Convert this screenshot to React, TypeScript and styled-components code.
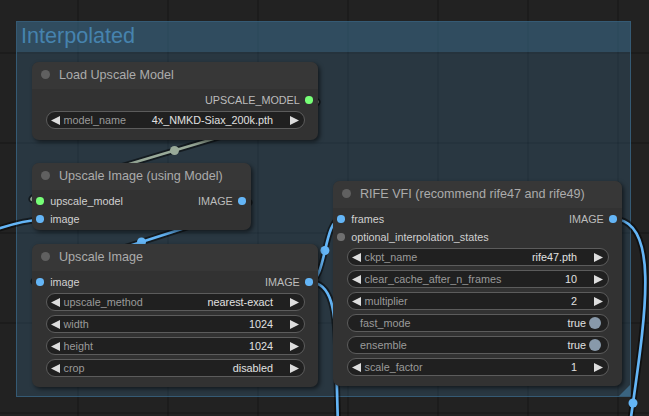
import React from "react";
import styled, { createGlobalStyle } from "styled-components";

const FONT = `"Liberation Sans", Arial, sans-serif`;

const GlobalStyle = createGlobalStyle`
  html, body { margin: 0; padding: 0; background: #222; overflow: hidden; }
  #root { width: 649px; height: 416px; }
`;

const Canvas = styled.div`
  position: relative;
  width: 649px;
  height: 416px;
  overflow: hidden;
  background-color: #222;
  background-image:
    linear-gradient(to right, rgba(0, 0, 0, 0.17) 2px, transparent 2px),
    linear-gradient(to bottom, rgba(0, 0, 0, 0.17) 2px, transparent 2px);
  background-size: 90px 90px;
  background-position: 77px 52px;
  font-family: ${FONT};
`;

const Group = styled.div`
  position: absolute;
  left: 16px;
  top: 21px;
  width: 615px;
  height: 376px;
  box-sizing: border-box;
  background: rgba(63, 120, 158, 0.25);
  border: 1px solid rgba(63, 120, 158, 0.55);
  display: flex;
  flex-direction: column;
`;

const GroupTitle = styled.div`
  height: 30px;
  background: rgba(63, 120, 158, 0.33);
  color: #4683ae;
  font-size: 21.6px;
  line-height: 28px;
  padding-left: 4px;
  white-space: nowrap;
`;

const ResizeCorner = styled.div`
  position: absolute;
  right: 0;
  bottom: 0;
  width: 11px;
  height: 11px;
  background: rgba(70, 130, 170, 0.6);
  clip-path: polygon(100% 0, 100% 100%, 0 100%);
`;

const LinksLayer = styled.svg`
  position: absolute;
  left: 0;
  top: 0;
  width: 649px;
  height: 416px;
  overflow: visible;
  pointer-events: none;
`;

const Node = styled.div<{ $x: number; $y: number; $w: number }>`
  position: absolute;
  left: ${(p) => p.$x}px;
  top: ${(p) => p.$y}px;
  width: ${(p) => p.$w}px;
  background: #323232;
  border-radius: 7px;
  box-shadow: 2px 2px 4px rgba(0, 0, 0, 0.55);
  display: flex;
  flex-direction: column;
`;

const NodeTitle = styled.div`
  height: 27px;
  box-sizing: border-box;
  background: #373737;
  border-radius: 7px 7px 0 0;
  display: flex;
  align-items: center;
  gap: 9.5px;
  padding: 0 0 2px 8.5px;
  color: #ababab;
  font-size: 12.6px;
  white-space: nowrap;
`;

const TitleDot = styled.span`
  width: 9px;
  height: 9px;
  border-radius: 50%;
  background: #606060;
  flex: none;
`;

const NodeBody = styled.div<{ $pb: number }>`
  display: flex;
  flex-direction: column;
  padding: 2px 0 ${(p) => p.$pb}px;
`;

const SlotRow = styled.div`
  height: 18px;
  display: flex;
  align-items: center;
  font-size: 10.8px;
  white-space: nowrap;
`;

const InputSlot = styled.div`
  display: flex;
  align-items: center;
  gap: 6.4px;
  padding-left: 4.4px;
  color: #d0d0d0;
`;

const OutputSlot = styled.div`
  display: flex;
  align-items: center;
  gap: 5.4px;
  padding-right: 5.4px;
  margin-left: auto;
  color: #bcbcbc;
`;

const SlotDot = styled.span<{ $color: string }>`
  width: 7.4px;
  height: 7.4px;
  border-radius: 50%;
  background: ${(p) => p.$color};
  flex: none;
`;

const Widgets = styled.div`
  display: flex;
  flex-direction: column;
  gap: 4px;
  margin-top: 2px;
  padding: 0 13.5px;
`;

const WidgetBox = styled.div<{ $toggle?: boolean }>`
  height: 18px;
  box-sizing: border-box;
  border: 1px solid #5c5c5c;
  border-radius: 9px;
  background: #202020;
  display: flex;
  align-items: center;
  font-size: 10.8px;
  line-height: 16px;
  white-space: nowrap;
  padding: ${(p) => (p.$toggle ? "0 6.2px 0 12.5px" : "0 4.4px")};
`;

const WLabel = styled.span<{ $toggle?: boolean }>`
  color: #9a9a9a;
  flex: 1;
  margin-left: ${(p) => (p.$toggle ? "0" : "3.6px")};
`;

const WValue = styled.span<{ $toggle?: boolean }>`
  color: #e0e0e0;
  margin-right: ${(p) => (p.$toggle ? "2.7px" : "17.1px")};
`;

const Knob = styled.span`
  width: 12.6px;
  height: 12.6px;
  border-radius: 50%;
  background: #8899aa;
  flex: none;
`;

const ArrowIcon = styled.svg`
  width: 9px;
  height: 9px;
  flex: none;
  display: block;
`;

const BLUE = "#64b5f6";
const GREEN = "#77ff77";
const GRAY = "#707070";

type Slot = { label: string; color: string };
type Widget =
  | { kind: "combo"; label: string; value: string }
  | { kind: "toggle"; label: string; value: string };

type NodeDef = {
  title: string;
  x: number;
  y: number;
  w: number;
  pb: number;
  inputs: Slot[];
  outputs: Slot[];
  widgets: Widget[];
};

const nodes: NodeDef[] = [
  {
    title: "Load Upscale Model",
    x: 32,
    y: 62,
    w: 286,
    pb: 11,
    inputs: [],
    outputs: [{ label: "UPSCALE_MODEL", color: GREEN }],
    widgets: [{ kind: "combo", label: "model_name", value: "4x_NMKD-Siax_200k.pth" }],
  },
  {
    title: "Upscale Image (using Model)",
    x: 32,
    y: 163,
    w: 219,
    pb: 2,
    inputs: [
      { label: "upscale_model", color: GREEN },
      { label: "image", color: BLUE },
    ],
    outputs: [{ label: "IMAGE", color: BLUE }],
    widgets: [],
  },
  {
    title: "Upscale Image",
    x: 32,
    y: 244,
    w: 286,
    pb: 10,
    inputs: [{ label: "image", color: BLUE }],
    outputs: [{ label: "IMAGE", color: BLUE }],
    widgets: [
      { kind: "combo", label: "upscale_method", value: "nearest-exact" },
      { kind: "combo", label: "width", value: "1024" },
      { kind: "combo", label: "height", value: "1024" },
      { kind: "combo", label: "crop", value: "disabled" },
    ],
  },
  {
    title: "RIFE VFI (recommend rife47 and rife49)",
    x: 333,
    y: 181,
    w: 289,
    pb: 10,
    inputs: [
      { label: "frames", color: BLUE },
      { label: "optional_interpolation_states", color: GRAY },
    ],
    outputs: [{ label: "IMAGE", color: BLUE }],
    widgets: [
      { kind: "combo", label: "ckpt_name", value: "rife47.pth" },
      { kind: "combo", label: "clear_cache_after_n_frames", value: "10" },
      { kind: "combo", label: "multiplier", value: "2" },
      { kind: "toggle", label: "fast_mode", value: "true" },
      { kind: "toggle", label: "ensemble", value: "true" },
      { kind: "combo", label: "scale_factor", value: "1" },
    ],
  },
];

type LinkDef = { d: string; color: string; mid?: [number, number] };

const links: LinkDef[] = [
  { d: "M309 100 C381 100 -32 201 40 201", color: "#99aa99", mid: [174.5, 150.5] },
  { d: "M243 201 C297.7 201 -14.7 283 40 283", color: BLUE, mid: [141.5, 242] },
  { d: "M-200 300 C-146 300 -13.8 220 40 220", color: BLUE },
  { d: "M309 282 C326.5 282 323.5 219 341 219", color: BLUE, mid: [324.9, 250.5] },
  { d: "M309 282 C332 282 336 310 336.5 360 S338 410 338 440", color: BLUE },
  { d: "M613 219 C705.5 219 560.5 587 653 587", color: BLUE, mid: [633, 403] },
];

const Arrow: React.FC<{ dir: "left" | "right" }> = ({ dir }) => (
  <ArrowIcon viewBox="0 0 9 9">
    <polygon points={dir === "left" ? "9,0 0,4.5 9,9" : "0,0 9,4.5 0,9"} fill="#dddddd" />
  </ArrowIcon>
);

const WidgetView: React.FC<{ w: Widget }> = ({ w }) =>
  w.kind === "toggle" ? (
    <WidgetBox $toggle>
      <WLabel $toggle>{w.label}</WLabel>
      <WValue $toggle>{w.value}</WValue>
      <Knob />
    </WidgetBox>
  ) : (
    <WidgetBox>
      <Arrow dir="left" />
      <WLabel>{w.label}</WLabel>
      <WValue>{w.value}</WValue>
      <Arrow dir="right" />
    </WidgetBox>
  );

const NodeView: React.FC<{ n: NodeDef }> = ({ n }) => {
  const rows = Math.max(n.inputs.length, n.outputs.length);
  return (
    <Node $x={n.x} $y={n.y} $w={n.w}>
      <NodeTitle>
        <TitleDot />
        {n.title}
      </NodeTitle>
      <NodeBody $pb={n.pb}>
        {Array.from({ length: rows }).map((_, i) => (
          <SlotRow key={i}>
            {n.inputs[i] && (
              <InputSlot>
                <SlotDot $color={n.inputs[i].color} />
                {n.inputs[i].label}
              </InputSlot>
            )}
            {n.outputs[i] && (
              <OutputSlot>
                {n.outputs[i].label}
                <SlotDot $color={n.outputs[i].color} />
              </OutputSlot>
            )}
          </SlotRow>
        ))}
        {n.widgets.length > 0 && (
          <Widgets>
            {n.widgets.map((w) => (
              <WidgetView key={w.label} w={w} />
            ))}
          </Widgets>
        )}
      </NodeBody>
    </Node>
  );
};

export default function App() {
  return (
    <>
      <GlobalStyle />
      <Canvas>
        <Group>
          <GroupTitle>Interpolated</GroupTitle>
          <ResizeCorner />
        </Group>
        <LinksLayer viewBox="0 0 649 416">
          {links.map((l, i) => (
            <g key={i}>
              <path d={l.d} fill="none" stroke="rgba(0,0,0,0.5)" strokeWidth={6.3} />
              <path d={l.d} fill="none" stroke={l.color} strokeWidth={2.7} />
              {l.mid && <circle cx={l.mid[0]} cy={l.mid[1]} r={4.5} fill={l.color} />}
            </g>
          ))}
        </LinksLayer>
        {nodes.map((n) => (
          <NodeView key={n.title} n={n} />
        ))}
      </Canvas>
    </>
  );
}
